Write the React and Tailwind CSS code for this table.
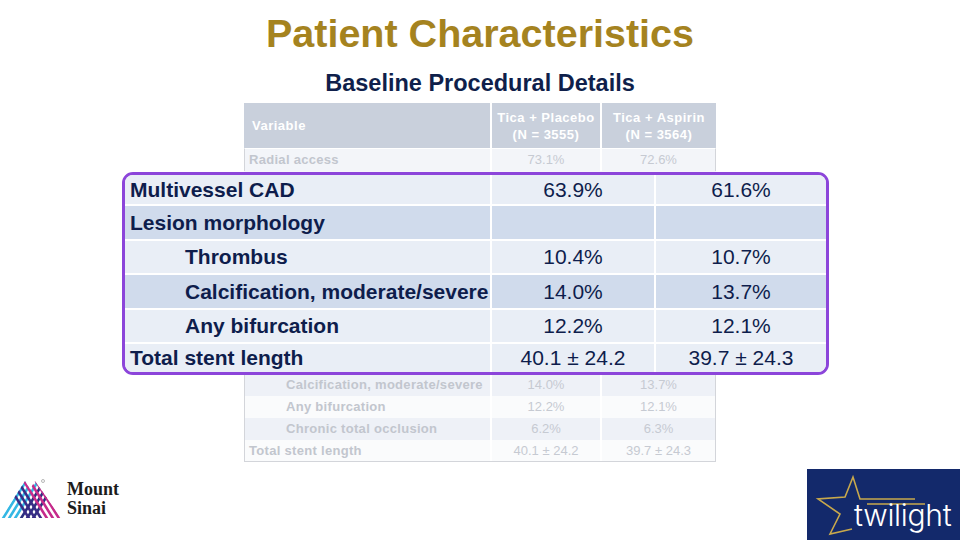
import React from "react";

const bgRows = [
  { label: "Calcification, moderate/severe", a: "14.0%", b: "13.7%", indent: true, shade: true },
  { label: "Any bifurcation", a: "12.2%", b: "12.1%", indent: true, shade: false },
  { label: "Chronic total occlusion", a: "6.2%", b: "6.3%", indent: true, shade: true },
  { label: "Total stent length", a: "40.1 ± 24.2", b: "39.7 ± 24.3", indent: false, shade: false },
];

const bigRows = [
  { label: "Multivessel CAD", a: "63.9%", b: "61.6%", indent: false, dark: false, h: "h-[31px]" },
  { label: "Lesion morphology", a: "", b: "", indent: false, dark: true, h: "h-[35px]" },
  { label: "Thrombus", a: "10.4%", b: "10.7%", indent: true, dark: false, h: "h-[34px]" },
  { label: "Calcification, moderate/severe", a: "14.0%", b: "13.7%", indent: true, dark: true, h: "h-[35px]" },
  { label: "Any bifurcation", a: "12.2%", b: "12.1%", indent: true, dark: false, h: "h-[34px]" },
  { label: "Total stent length", a: "40.1 ± 24.2", b: "39.7 ± 24.3", indent: false, dark: false, h: "h-[28px]" },
];

function BackTable() {
  return (
    <div className="ml-[244px] w-[472px] mt-[8px] text-[13px]">
      {/* header */}
      <div className="flex h-[45px] bg-[#c9d0dc] text-white font-bold tracking-[0.5px]">
        <div className="w-[246px] flex items-center pl-[8px] pt-[1px]">Variable</div>
        <div className="w-[110px] border-l-2 border-white flex flex-col items-center justify-center leading-[17px]">
          <span>Tica + Placebo</span>
          <span>(N = 3555)</span>
        </div>
        <div className="flex-1 border-l-2 border-white flex flex-col items-center justify-center leading-[17px]">
          <span>Tica + Aspirin</span>
          <span>(N = 3564)</span>
        </div>
      </div>
      <div className="flex h-[23px] bg-[#f3f5f9] border-l border-r border-[#d3d5da] border-t border-t-white">
        <div className="w-[245px] flex items-center pl-[4px] font-bold text-[#c2c6ce] tracking-[0.3px]">Radial access</div>
        <div className="w-[110px] border-l-2 border-white flex items-center justify-center text-[#c6cad2]">73.1%</div>
        <div className="flex-1 border-l-2 border-white flex items-center justify-center text-[#c6cad2]">72.6%</div>
      </div>
      {/* rows hidden behind the callout */}
      <div className="h-[203px] bg-[#f6f7fa]"></div>
      {bgRows.map((r, i) => (
        <div
          key={i}
          className={
            "flex h-[22px] border-l border-r border-[#d3d5da] " +
            (r.shade ? "bg-[#eef1f7]" : "bg-[#fafbfc]") +
            (i === bgRows.length - 1 ? " border-b" : "")
          }
        >
          <div
            className={
              "w-[245px] flex items-center font-bold text-[#c2c6ce] tracking-[0.3px] " +
              (r.indent ? "pl-[41px]" : "pl-[4px]")
            }
          >
            {r.label}
          </div>
          <div className="w-[110px] border-l-2 border-white flex items-center justify-center text-[#c6cad2]">{r.a}</div>
          <div className="flex-1 border-l-2 border-white flex items-center justify-center text-[#c6cad2]">{r.b}</div>
        </div>
      ))}
    </div>
  );
}

function Callout() {
  return (
    <div className="absolute left-[122px] top-[172px] w-[707px] h-[203px] border-[3px] border-[#8c45da] rounded-[11px] overflow-hidden bg-white text-[21px] text-[#0e1d4c]">
      {bigRows.map((r, i) => (
        <div
          key={i}
          className={
            "flex " +
            r.h +
            " " +
            (r.dark ? "bg-[#d0dbec]" : "bg-[#e9eef6]") +
            (i < bigRows.length - 1 ? " border-b-2 border-white" : "")
          }
        >
          <div
            className={
              "w-[365px] flex items-center font-bold whitespace-nowrap " + (r.indent ? "pl-[60px]" : "pl-[5px]")
            }
          >
            {r.label}
          </div>
          <div className="w-[164px] border-l-2 border-white flex items-center justify-center">{r.a}</div>
          <div className="flex-1 border-l-2 border-white flex items-center justify-center">{r.b}</div>
        </div>
      ))}
    </div>
  );
}

function MountSinai() {
  const up = [1, 7, 13, 19, 25, 31];
  const down = [59, 53, 47, 41, 35, 29];
  return (
    <div className="flex items-center gap-[4px] mt-[16px]">
      <svg width="62" height="42" viewBox="0 0 62 42">
        <defs>
          <clipPath id="peaks">
            <polygon points="0,40 24,3 29,11 34,3 60,40" />
          </clipPath>
        </defs>
        <g clipPath="url(#peaks)" strokeWidth="2.6">
          {up.map((x, i) => (
            <line key={"u" + i} x1={x} y1={42} x2={x + 26} y2={0} stroke={i < 3 ? "#33b7e4" : "#2b2f80"} />
          ))}
          {down.map((x, i) => (
            <line key={"d" + i} x1={x} y1={42} x2={x - 26} y2={0} stroke={i < 3 ? "#c52a8b" : "#3a2c86"} />
          ))}
        </g>
        <circle cx="42" cy="3" r="1.5" fill="none" stroke="#888" strokeWidth="0.6" />
      </svg>
      <div className="font-['Liberation_Serif',serif] font-bold text-[18px] leading-[19px] text-[#1c1c1c]">
        <div>Mount</div>
        <div>Sinai</div>
      </div>
    </div>
  );
}

function Twilight() {
  return (
    <div className="relative w-[153px] h-[73px] bg-[#13296b] mt-[7px]">
      <svg className="absolute inset-0" width="153" height="73" viewBox="0 0 153 73">
        <polyline
          points="108,30 53,30 46,8 38,28 11,30 33,45 23,65 45,60"
          fill="none"
          stroke="#c8a84c"
          strokeWidth="1.6"
          strokeLinejoin="miter"
        />
        <line x1="60" y1="35" x2="118" y2="35" stroke="#c8a84c" strokeWidth="1.6" />
      </svg>
      <div className="relative pl-[47px] pt-[31px] font-['Inter',sans-serif] font-light text-[30px] leading-none text-white tracking-[-0.3px]">
        twilight
      </div>
    </div>
  );
}

export default function App() {
  return (
    <div className="relative w-[960px] h-[540px] bg-white overflow-hidden font-['Liberation_Sans',Arial,sans-serif]">
      <h1 className="pt-[14px] text-center text-[39.5px] leading-none font-bold text-[#a5831f]">
        Patient Characteristics
      </h1>
      <h2 className="mt-[18px] text-center text-[23.5px] leading-none font-bold text-[#0f1f4b]">
        Baseline Procedural Details
      </h2>
      <BackTable />
      <div className="flex justify-between items-start pl-[1px]">
        <MountSinai />
        <Twilight />
      </div>
      <Callout />
    </div>
  );
}
